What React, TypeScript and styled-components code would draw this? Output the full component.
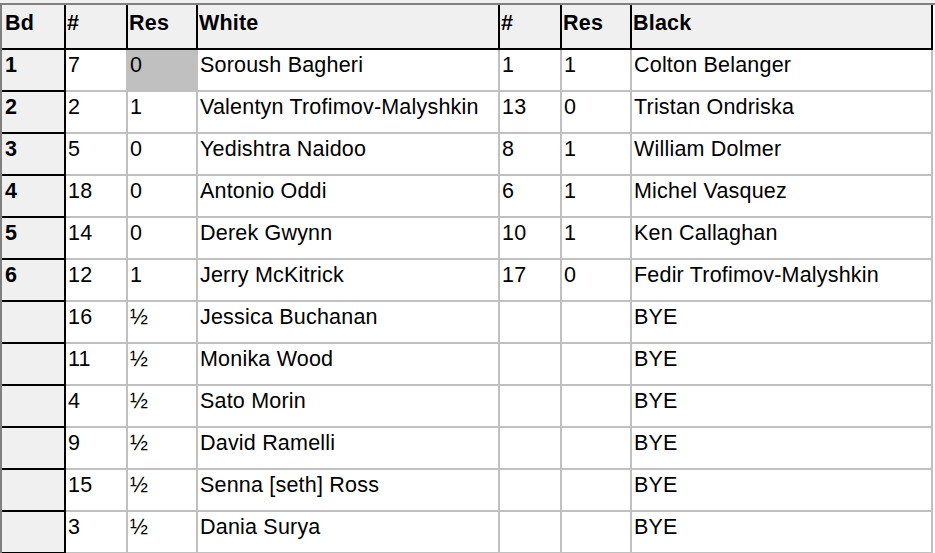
import React from "react";
import styled, { createGlobalStyle } from "styled-components";

const Global = createGlobalStyle`
  html, body { margin: 0; padding: 0; background: #ffffff; }
  body { font-family: "Liberation Sans", Arial, sans-serif; }
`;

const Frame = styled.div`
  border-top: 3px solid #f0f0f0;
  width: 935px;
  height: 553px;
  overflow: hidden;
  box-sizing: border-box;
`;

const Sunken = styled.div`
  border-top: 2px solid #808080;
  border-left: 2px solid #808080;
  width: 933px;
`;

const Grid = styled.div`
  display: grid;
  grid-template-columns: 64px 62px 70px 302px 62px 70px 301px;
  font-size: 21.5px;
  letter-spacing: 0.2px;
  color: #000;
`;

const HeadCell = styled.div<{ $first?: boolean }>`
  height: 45px;
  box-sizing: border-box;
  background: #f0f0f0;
  border-right: 2px solid #000;
  border-bottom: 2px solid #000;
  font-weight: bold;
  line-height: 24px;
  padding: 6px 0 0 ${(p) => (p.$first ? "3px" : "1px")};
  white-space: nowrap;
`;

const BoardCell = styled.div`
  height: 42px;
  box-sizing: border-box;
  background: #f0f0f0;
  border-right: 2px solid #000;
  border-bottom: 2px solid #000;
  font-weight: bold;
  line-height: 24px;
  padding: 3px 0 0 3px;
`;

const Cell = styled.div<{ $shaded?: boolean }>`
  height: 42px;
  box-sizing: border-box;
  background: ${(p) => (p.$shaded ? "#c0c0c0" : "#ffffff")};
  border-right: 2px solid #c0c0c0;
  border-bottom: 2px solid #c0c0c0;
  line-height: 24px;
  padding: 3px 0 0 2px;
  white-space: nowrap;
`;

type Row = {
  bd: string;
  wn: string;
  wr: string;
  white: string;
  bn: string;
  br: string;
  black: string;
};

const rows: Row[] = [
  { bd: "1", wn: "7", wr: "0", white: "Soroush Bagheri", bn: "1", br: "1", black: "Colton Belanger" },
  { bd: "2", wn: "2", wr: "1", white: "Valentyn Trofimov-Malyshkin", bn: "13", br: "0", black: "Tristan Ondriska" },
  { bd: "3", wn: "5", wr: "0", white: "Yedishtra Naidoo", bn: "8", br: "1", black: "William Dolmer" },
  { bd: "4", wn: "18", wr: "0", white: "Antonio Oddi", bn: "6", br: "1", black: "Michel Vasquez" },
  { bd: "5", wn: "14", wr: "0", white: "Derek Gwynn", bn: "10", br: "1", black: "Ken Callaghan" },
  { bd: "6", wn: "12", wr: "1", white: "Jerry McKitrick", bn: "17", br: "0", black: "Fedir Trofimov-Malyshkin" },
  { bd: "", wn: "16", wr: "½", white: "Jessica Buchanan", bn: "", br: "", black: "BYE" },
  { bd: "", wn: "11", wr: "½", white: "Monika Wood", bn: "", br: "", black: "BYE" },
  { bd: "", wn: "4", wr: "½", white: "Sato Morin", bn: "", br: "", black: "BYE" },
  { bd: "", wn: "9", wr: "½", white: "David Ramelli", bn: "", br: "", black: "BYE" },
  { bd: "", wn: "15", wr: "½", white: "Senna [seth] Ross", bn: "", br: "", black: "BYE" },
  { bd: "", wn: "3", wr: "½", white: "Dania Surya", bn: "", br: "", black: "BYE" },
];

const headers = ["Bd", "#", "Res", "White", "#", "Res", "Black"];

export default function App() {
  return (
    <>
      <Global />
      <Frame>
        <Sunken>
          <Grid>
            {headers.map((h, i) => (
              <HeadCell key={i} $first={i === 0}>
                {h}
              </HeadCell>
            ))}
            {rows.map((r, i) => (
              <React.Fragment key={i}>
                <BoardCell>{r.bd}</BoardCell>
                <Cell>{r.wn}</Cell>
                <Cell $shaded={i === 0}>{r.wr}</Cell>
                <Cell>{r.white}</Cell>
                <Cell>{r.bn}</Cell>
                <Cell>{r.br}</Cell>
                <Cell>{r.black}</Cell>
              </React.Fragment>
            ))}
          </Grid>
        </Sunken>
      </Frame>
    </>
  );
}
